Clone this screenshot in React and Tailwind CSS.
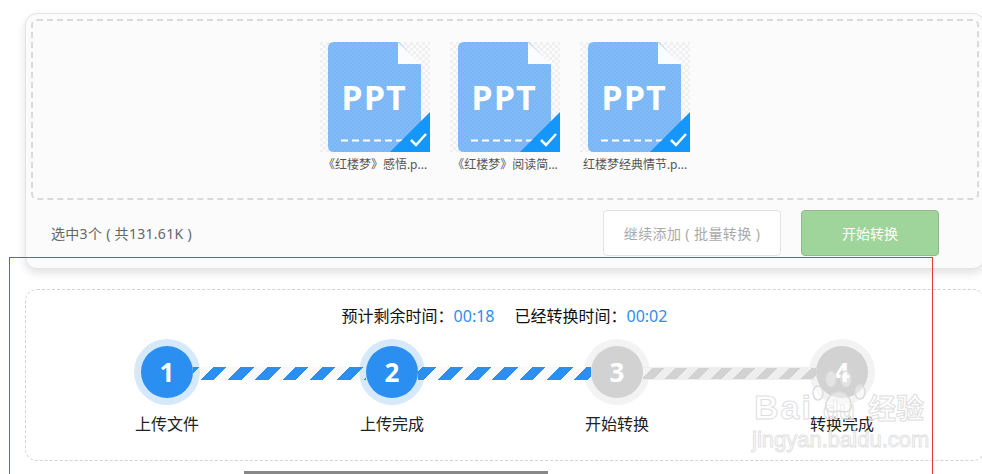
import React from "react";

const cjk = "font-['Noto_Sans','Noto_Sans_CJK_SC',sans-serif]";

const files = ["《红楼梦》感悟.p...", "《红楼梦》阅读简...", "红楼梦经典情节.p..."];

const FileIcon = ({ id }) => (
  <svg width="110" height="110" viewBox="0 0 110 110" className="block">
    <defs>
      <pattern id={id} width="6" height="6" patternUnits="userSpaceOnUse">
        <rect width="3" height="3" fill="#f0f0f0" />
        <rect x="3" y="3" width="3" height="3" fill="#f0f0f0" />
      </pattern>
      <pattern id={`${id}-doc`} width="4" height="4" patternUnits="userSpaceOnUse">
        <rect width="2" height="2" fill="#ffffff" fillOpacity="0.07" />
        <rect x="2" y="2" width="2" height="2" fill="#ffffff" fillOpacity="0.07" />
      </pattern>
    </defs>
    <rect width="110" height="110" fill={`url(#${id})`} />
    <path d="M14 0H79L101 23V110H14Q8 110 8 104V6Q8 0 14 0Z" fill="#79b6f6" />
    <path d="M14 0H79L101 23V110H14Q8 110 8 104V6Q8 0 14 0Z" fill={`url(#${id}-doc)`} />
    <path d="M78 0L101 22H78Z" fill="#fafcff" />
    <text x="54" y="68" textAnchor="middle" fill="#ffffff" fontSize="34" fontWeight="700" letterSpacing="1" fontFamily="Open Sans, sans-serif">
      PPT
    </text>
    <path d="M21 98.500H85" stroke="#ffffff" strokeWidth="2" strokeDasharray="7 4" />
    <path d="M70 110L110 70V110Z" fill="#1496fb" />
    <path d="M91 98L96 103L106 92" fill="none" stroke="#ffffff" strokeWidth="2.500" />
  </svg>
);

const Step = ({ n, label, active, bar }) => (
  <div className="flex flex-col w-[225px] shrink-0">
    <div className="flex items-center">
      <div className={`relative flex items-center justify-center w-[66px] h-[66px] rounded-full shrink-0 ${active ? "bg-[#d5e9fb]" : "bg-[#f3f3f3]"}`}>
        <div className={`relative z-20 flex items-center justify-center w-[52px] h-[52px] rounded-full text-white text-[26px] font-bold font-['Open_Sans',sans-serif] ${active ? "bg-[#2a8ff1]" : "bg-[#d2d2d2]"}`}>
          {n}
        </div>
      </div>
      {bar && <div className={`relative z-10 -mx-[7px] mt-[3px] w-[173px] shrink-0 h-[13px] ${bar}`} />}
    </div>
    <div className="w-[66px] flex justify-center mt-[7px]">
      <span className="whitespace-nowrap text-[16px] leading-[24px] text-[#222]">{label}</span>
    </div>
  </div>
);

export default function App() {
  return (
    <div className={`relative w-[982px] h-[474px] overflow-hidden bg-white ${cjk}`}>
      <div className="pt-[13px] pl-[25px]">
        {/* upload card */}
        <div className="w-[960px] h-[256px] p-[5px] bg-[#fbfbfb] border border-[#e4e4e4] rounded-[12px] shadow-[0_4px_10px_rgba(0,0,0,0.12)]">
          <div className="h-[181px] border-2 border-dashed border-[#dadada] rounded-[6px] flex justify-center gap-[20px] pt-[21px]">
            {files.map((name, i) => (
              <div key={name} className="w-[110px] flex flex-col items-center">
                <FileIcon id={`chk${i}`} />
                <span className="mt-[4px] text-[12px] leading-[18px] text-[#555] whitespace-nowrap">{name}</span>
              </div>
            ))}
          </div>
          <div className="flex items-center mt-[10px] pl-[20px]">
            <span className="text-[14px] tracking-[0.3px] text-[#666]">选中3个 ( 共131.61K )</span>
            <button className="ml-auto w-[178px] h-[46px] bg-white border border-[#e3e3e3] rounded-[4px] text-[14px] tracking-[0.4px] text-[#aaa]">
              继续添加 ( 批量转换 )
            </button>
            <button className="ml-[20px] mr-[40px] w-[138px] h-[46px] bg-[#9fd49b] border border-[#8dbb88] rounded-[4px] text-[14px] text-white">
              开始转换
            </button>
          </div>
        </div>

        {/* progress card */}
        <div className="mt-[20px] w-[960px] h-[172px] border border-dashed border-[#d4d4d4] rounded-[12px] pt-[14px]">
          <div className="flex justify-center gap-[20px] pr-[1px] text-[16px] leading-[24px] text-[#111]">
            <span>预计剩余时间：<span className="text-[#2a8ff1]">00:18</span></span>
            <span>已经转换时间：<span className="text-[#2a8ff1]">00:02</span></span>
          </div>
          <div className="flex pl-[108px] mt-[11px]">
            <Step
              n="1"
              label="上传文件"
              active
              bar="bg-[repeating-linear-gradient(135deg,#2a8ff1_0,#2a8ff1_4.6px,transparent_4.6px,transparent_14.25px,#2a8ff1_14.25px,#2a8ff1_19.3px),linear-gradient(90deg,transparent_7px,#f8f9fa_7px,#f8f9fa_166px,transparent_166px)]"
            />
            <Step
              n="2"
              label="上传完成"
              active
              bar="bg-[repeating-linear-gradient(135deg,transparent_0,transparent_3.5px,#2a8ff1_3.5px,#2a8ff1_13.15px,transparent_13.15px,transparent_19.3px),linear-gradient(90deg,transparent_7px,#f8f9fa_7px,#f8f9fa_159px,transparent_159px)]"
            />
            <Step
              n="3"
              label="开始转换"
              bar="border-y border-[#eeeeee] bg-[repeating-linear-gradient(135deg,transparent_0,transparent_7.07px,#d2d2d2_7.07px,#d2d2d2_15.1px,transparent_15.1px,transparent_16.05px),linear-gradient(90deg,transparent_7px,#eeeeee_7px,#eeeeee_166px,transparent_166px)]"
            />
            <Step n="4" label="转换完成" />
          </div>
        </div>
      </div>

      {/* red annotation frame */}
      <div className="absolute left-[9px] top-[257px] w-[924px] h-[220px] border border-[#e53935] pointer-events-none z-30" />

      {/* scrollbar thumb */}
      <div className="absolute left-[244px] top-[471px] w-[304px] h-[3px] bg-[#888]" />

      {/* watermark */}
      <div className="absolute left-[752px] top-[384px] w-[180px] h-[72px] z-30 pointer-events-none font-['Liberation_Sans',sans-serif]">
        <span className="absolute left-[2px] top-[6px] text-[34px] leading-[34px] tracking-[2px] font-bold text-white/60 [-webkit-text-stroke:1px_#dedede]">Bai</span>
        <span className="absolute left-[71px] top-[13px] text-[26px] leading-[26px] font-bold text-white/60 [-webkit-text-stroke:1px_#dedede]">du</span>
        <span className={`absolute left-[116px] top-[7px] text-[28px] leading-[34px] font-bold text-white/60 [-webkit-text-stroke:1px_#dedede] ${cjk}`}>经验</span>
        <span className="absolute left-0 top-[43px] text-[22px] leading-[26px] text-white/50 [-webkit-text-stroke:1px_#e2e2e2] whitespace-nowrap">jingyan.baidu.com</span>
        <svg className="absolute left-[58px] -top-[16px]" width="60" height="50" viewBox="0 0 60 50">
          <g fill="#ffffff" fillOpacity="0.4" stroke="#dcdcdc" strokeWidth="1.500">
            <ellipse cx="8" cy="25" rx="5" ry="7" />
            <ellipse cx="21" cy="11" rx="5" ry="8" />
            <ellipse cx="36" cy="11" rx="5" ry="8" />
            <ellipse cx="50" cy="24" rx="5" ry="7" />
            <path d="M29 24C38 24 44 36 40 42C36 46 32 43 29 43C25 43 21 46 17 42C13 36 20 24 29 24Z" />
          </g>
        </svg>
      </div>
    </div>
  );
}
